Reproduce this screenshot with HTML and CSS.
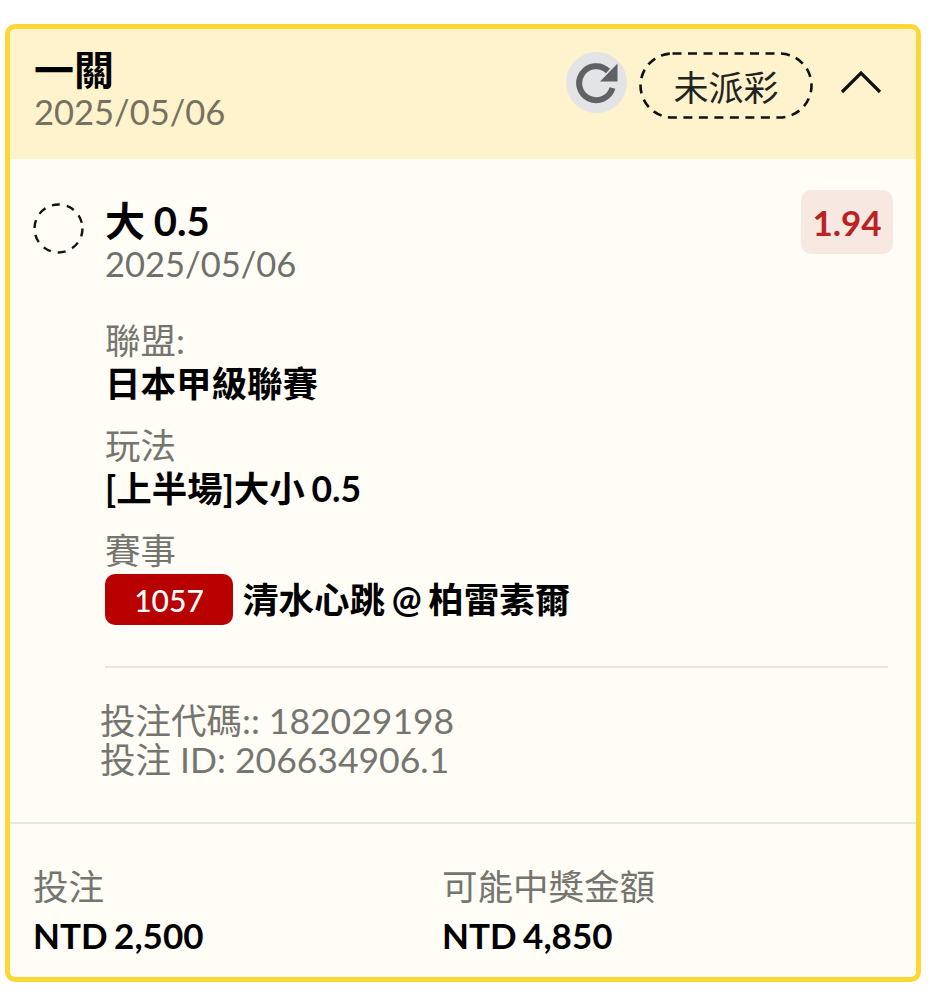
FILE: index.html
```html
<!DOCTYPE html>
<html lang="zh-Hant">
<head>
    <meta charset="UTF-8">
    <meta name="viewport" content="width=device-width, initial-scale=1.0">
    <title>一關</title>
    <link rel="stylesheet" href="styles.css">
</head>
<body>
    <div class="card">
        <div class="card-head">
            <div class="head-text">
                <div class="head-title">一關</div>
                <div class="head-date">2025/05/06</div>
            </div>
            <div class="head-actions">
                <span class="refresh">
                    <svg width="44" height="44" viewBox="0 0 44 44">
                        <path d="M37.5 27A17 17 0 1 1 33 10" fill="none" stroke="#5f6164" stroke-width="6"/>
                        <path d="M42.5 2.5V20.5H25Z" fill="#5f6164"/>
                    </svg>
                </span>
                <span class="status">
                    未派彩
                    <svg class="status-line" width="174" height="67" viewBox="0 0 174 67">
                        <rect x="1.5" y="1.5" width="171" height="64" rx="32" fill="none" stroke="#111" stroke-width="2.6" stroke-dasharray="9 6.5"/>
                    </svg>
                </span>
                <svg class="chevron" width="42" height="24" viewBox="0 0 42 24">
                    <path d="M2 22L21 3L40 22" fill="none" stroke="#111" stroke-width="3.2"/>
                </svg>
            </div>
        </div>

        <div class="bet">
            <div class="bet-top">
                <svg class="bet-dot" width="51" height="51" viewBox="0 0 51 51">
                    <circle cx="25.5" cy="25.5" r="24" fill="none" stroke="#111" stroke-width="2.4" stroke-dasharray="8 7.1"/>
                </svg>
                <div class="bet-name">
                    <div class="bet-title">大 0.5</div>
                    <div class="bet-date">2025/05/06</div>
                </div>
                <span class="odds">1.94</span>
            </div>

            <div class="details">
                <div class="detail">
                    <div class="detail-label">聯盟:</div>
                    <div class="detail-value">日本甲級聯賽</div>
                </div>
                <div class="detail">
                    <div class="detail-label">玩法</div>
                    <div class="detail-value">[上半場]大小 0.5</div>
                </div>
                <div class="detail">
                    <div class="detail-label">賽事</div>
                    <div class="detail-value match">
                        <span class="match-no">1057</span>
                        <span>清水心跳 @ 柏雷素爾</span>
                    </div>
                </div>
            </div>

            <div class="codes">
                <div>投注代碼:: 182029198</div>
                <div>投注 ID: 206634906.1</div>
            </div>
        </div>

        <div class="totals">
            <div class="total">
                <div class="total-label">投注</div>
                <div class="total-value">NTD 2,500</div>
            </div>
            <div class="total">
                <div class="total-label">可能中獎金額</div>
                <div class="total-value">NTD 4,850</div>
            </div>
        </div>
    </div>
</body>
</html>
```

FILE: styles.css
```css
body {
    margin: 0;
    padding: 24px 0 0 5px;
    background-color: #fff;
    font-family: Lato, "Noto Sans CJK TC", sans-serif;
    color: #000;
}

.card {
    width: 916px;
    height: 958px;
    box-sizing: border-box;
    border: 5px solid #fdd835;
    border-radius: 10px;
    background-color: #fffdf6;
    overflow: hidden;
}

.card-head {
    height: 130px;
    box-sizing: border-box;
    padding: 19px 34px 0 24px;
    display: flex;
    justify-content: space-between;
    background-color: #fff3cd;
}

.head-title {
    font-size: 40px;
    font-weight: 700;
    line-height: 44px;
}

.head-date {
    font-size: 34.5px;
    line-height: 40px;
    color: #75705f;
}

.head-actions {
    display: flex;
    align-items: flex-start;
}

.refresh {
    width: 61px;
    height: 61px;
    margin-top: 4px;
    display: flex;
    align-items: center;
    justify-content: center;
    border-radius: 50%;
    background-color: #e3e4e6;
}

.status {
    position: relative;
    width: 174px;
    height: 67px;
    margin: 4px 0 0 12px;
    display: flex;
    align-items: center;
    justify-content: center;
    font-size: 35px;
    color: #222;
}

.status-line {
    position: absolute;
    left: 0;
    top: 0;
}

.chevron {
    margin: 22px 0 0 27px;
}

.bet {
    height: 665px;
    box-sizing: border-box;
    padding: 30px 23px 0;
    border-bottom: 2px solid #e8e6df;
}

.bet-top {
    display: flex;
    align-items: flex-start;
}

.bet-dot {
    margin-top: 14px;
}

.bet-name {
    margin-left: 21px;
    flex: 1;
}

.bet-title {
    font-size: 40px;
    font-weight: 700;
    line-height: 45px;
    margin-top: 10px;
    word-spacing: -1px;
}

.bet-date {
    font-size: 34.5px;
    line-height: 40px;
    color: #6f6f6b;
}

.odds {
    width: 92px;
    height: 64px;
    margin-top: 1px;
    display: flex;
    align-items: center;
    justify-content: center;
    border-radius: 10px;
    background-color: #f8e8e2;
    font-size: 35px;
    font-weight: 700;
    color: #b92323;
}

.details {
    margin: 37px 5px 0 72px;
    padding-bottom: 22px;
    border-bottom: 2px solid #e8e6df;
}

.detail {
    margin-bottom: 19px;
}

.detail-label {
    font-size: 35.5px;
    line-height: 40px;
    color: #75756f;
}

.detail-value {
    font-size: 35.5px;
    font-weight: 700;
    line-height: 46px;
    word-spacing: -2px;
}

.match {
    display: flex;
    align-items: center;
    gap: 10px;
    margin-top: 3px;
}

.match-no {
    width: 128px;
    height: 51px;
    display: flex;
    align-items: center;
    justify-content: center;
    border-radius: 10px;
    background-color: #b90000;
    color: #fff;
    font-size: 30px;
    font-weight: 500;
}

.codes {
    margin: 33px 0 0 67px;
    font-size: 35.5px;
    line-height: 39px;
    color: #75756f;
}

.totals {
    padding: 39px 23px 0;
    display: flex;
}

.total {
    width: 409px;
}

.total-label {
    font-size: 35.5px;
    line-height: 48px;
    color: #75756f;
}

.total-value {
    font-size: 35px;
    font-weight: 700;
    line-height: 48px;
    word-spacing: -2px;
}
```
